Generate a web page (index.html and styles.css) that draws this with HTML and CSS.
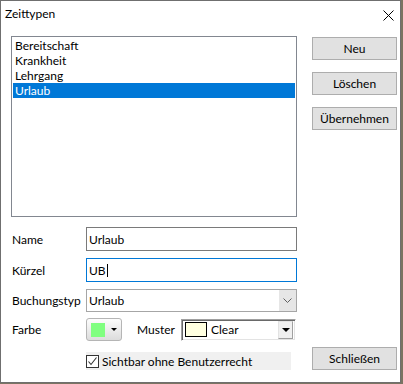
FILE: index.html
```html
<!DOCTYPE html>
<html lang="de">
<head>
<meta charset="utf-8">
<title>Zeittypen</title>
<link rel="stylesheet" href="styles.css">
</head>
<body>
<div class="window">
  <div class="titlebar">
    <span class="title">Zeittypen</span>
    <svg class="close" width="11" height="11" viewBox="0 0 11 11"><path d="M0.5 0.5 L10.5 10.5 M10.5 0.5 L0.5 10.5" stroke="#000" stroke-width="1" fill="none"/></svg>
  </div>
  <div class="content">
    <div class="left">
      <div class="listbox">
        <div class="item">Bereitschaft</div>
        <div class="item">Krankheit</div>
        <div class="item">Lehrgang</div>
        <div class="item selected">Urlaub</div>
      </div>
      <div class="row row-name">
        <span class="label">Name</span>
        <div class="input">Urlaub</div>
      </div>
      <div class="row row-kurz">
        <span class="label">Kürzel</span>
        <div class="input focus">UB<span class="caret"></span></div>
      </div>
      <div class="row row-combo">
        <span class="label">Buchungstyp</span>
        <div class="combo">
          <span class="combo-text">Urlaub</span>
          <span class="combo-btn"><svg width="9" height="5" viewBox="0 0 9 5"><path d="M0.5 0.5 L4.5 4.5 L8.5 0.5" stroke="#606060" stroke-width="1" fill="none"/></svg></span>
        </div>
      </div>
      <div class="row row-color">
        <span class="label">Farbe</span>
        <div class="colorbtn"><span class="swatch"></span><span class="tri"></span></div>
        <span class="muster-label">Muster</span>
        <div class="muster">
          <span class="muster-swatch"></span>
          <span class="muster-text">Clear</span>
          <span class="muster-btn"><span class="tri-big"></span></span>
        </div>
      </div>
      <div class="row row-check">
        <span class="label"></span>
        <div class="checkrow">
          <span class="checkbox"><svg width="11" height="11" viewBox="0 0 11 11"><path d="M1.5 5.5 L4 8.5 L9.5 1.5" stroke="#333" stroke-width="1.1" fill="none"/></svg></span>
          <span>Sichtbar ohne Benutzerrecht</span>
        </div>
      </div>
    </div>
    <div class="right">
      <div class="btn">Neu</div>
      <div class="btn">Löschen</div>
      <div class="btn">Übernehmen</div>
      <div class="btn btn-close">Schließen</div>
    </div>
  </div>
</div>
</body>
</html>
```

FILE: styles.css
```css
* { box-sizing: border-box; }
html, body { margin: 0; padding: 0; }
body {
  background: #7b7462;
  font-family: Lato, "Noto Sans", sans-serif;
  font-size: 12px;
  color: #000;
  width: 403px;
  height: 384px;
  overflow: hidden;
}
.window {
  width: 401px;
  height: 383px;
  background: #fff;
  border: 1px solid #6f6f6f;
  display: flex;
  flex-direction: column;
}
.titlebar {
  height: 30px;
  flex: none;
  display: flex;
  align-items: flex-start;
  justify-content: space-between;
  padding: 5px 6px 0 4px;
}
.title { line-height: 16px; }
.close { margin-top: 4px; }
.content {
  flex: 1;
  display: flex;
  gap: 15px;
  padding: 5px 3px 0 10px;
}
.left {
  width: 286px;
  display: flex;
  flex-direction: column;
}
.listbox {
  height: 181px;
  border: 1px solid #828790;
  padding: 1px;
  flex: none;
}
.item {
  height: 15px;
  line-height: 15px;
  padding-left: 2px;
}
.item.selected {
  background: #0078d7;
  color: #fff;
}
.row {
  display: flex;
  align-items: center;
  flex: none;
}
.label {
  width: 75px;
  padding-left: 1px;
  flex: none;
}
.row-name { margin-top: 10px; height: 24px; }
.row-kurz { margin-top: 7px; height: 24px; }
.row-combo { margin-top: 7px; height: 23px; }
.row-color { margin-top: 6px; height: 23px; }
.row-check { margin-top: 11px; height: 18px; }
.input {
  width: 211px;
  height: 100%;
  border: 1px solid #7a7a7a;
  padding-left: 2px;
  display: flex;
  align-items: center;
}
.input.focus { border-color: #0078d7; }
.caret {
  display: inline-block;
  width: 1px;
  height: 13px;
  background: #000;
  margin-left: 1px;
}
.combo {
  width: 211px;
  height: 100%;
  border: 1px solid #a6a6a6;
  display: flex;
  background: #fff;
}
.combo-text {
  flex: 1;
  padding-left: 2px;
  display: flex;
  align-items: center;
}
.combo-btn {
  width: 17px;
  background: #e6e6e6;
  display: flex;
  align-items: center;
  justify-content: center;
}
.colorbtn {
  width: 36px;
  height: 23px;
  border: 1px solid #b5b5b5;
  border-radius: 3px;
  background: linear-gradient(#fdfdfd, #dcdcdc);
  display: flex;
  align-items: center;
  padding-left: 4px;
}
.swatch {
  width: 14px;
  height: 14px;
  background: #80ff80;
}
.tri {
  width: 0;
  height: 0;
  border-left: 3px solid transparent;
  border-right: 3px solid transparent;
  border-top: 3px solid #000;
  margin-left: 6px;
}
.muster-label { margin-left: 15px; width: 44px; }
.muster {
  width: 115px;
  height: 22px;
  border-top: 1px solid #a0a0a0;
  border-left: 1px solid #a0a0a0;
  border-right: 1px solid #fff;
  border-bottom: 1px solid #fff;
  box-shadow: inset 1px 1px 0 #696969, inset -1px -1px 0 #e3e3e3;
  display: flex;
  align-items: center;
  padding: 0 2px 0 3px;
  background: #fff;
}
.muster-swatch {
  width: 22px;
  height: 15px;
  border: 1px solid #000;
  background: #ffffe0;
}
.muster-text { margin-left: 4px; flex: 1; }
.muster-btn {
  width: 15px;
  height: 18px;
  background: #f0f0f0;
  border-top: 1px solid #e3e3e3;
  border-left: 1px solid #e3e3e3;
  border-right: 1px solid #a0a0a0;
  border-bottom: 1px solid #a0a0a0;
  display: flex;
  align-items: center;
  justify-content: center;
}
.tri-big {
  width: 0;
  height: 0;
  border-left: 4px solid transparent;
  border-right: 4px solid transparent;
  border-top: 4px solid #000;
}
.checkrow {
  width: 205px;
  height: 18px;
  background: #f0f0f0;
  display: flex;
  align-items: center;
}
.checkbox {
  width: 13px;
  height: 13px;
  border: 1px solid #333;
  background: #fff;
  margin-right: 3px;
  display: flex;
}
.right {
  width: 85px;
  display: flex;
  flex-direction: column;
  gap: 12px;
  padding: 1px 0 12px;
}
.btn {
  height: 23px;
  background: #e1e1e1;
  border: 1px solid #adadad;
  display: flex;
  align-items: center;
  justify-content: center;
}
.btn-close { margin-top: auto; }
```
